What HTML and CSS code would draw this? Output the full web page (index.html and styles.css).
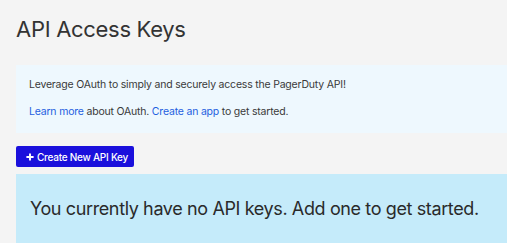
FILE: index.html
```html
<!DOCTYPE html>
<html>

<head>
    <title>API Access Keys</title>
    <link rel="stylesheet" href="styles.css">
</head>

<body>
    <div class="pagina">
        <h1 class="titlu">API Access Keys</h1>

        <div class="infoOAuth">
            <p>Leverage OAuth to simply and securely access the PagerDuty API!</p>
            <p><a href="#">Learn more</a> about OAuth. <a href="#">Create an app</a> to get started.</p>
        </div>

        <button type="button" class="butonCreare">
            <svg class="iconPlus" viewBox="0 0 10 10" width="8" height="8">
                <path d="M5 0.5v9M0.5 5h9" stroke="#fff" stroke-width="2.4" />
            </svg>
            Create New API Key
        </button>

        <div class="cheiGoale">
            <p>You currently have no API keys. Add one to get started.</p>
        </div>
    </div>
</body>

</html>
```

FILE: styles.css
```css
html {
    font-family: Inter, "Noto Sans", sans-serif;
}

body {
    margin: 0px;
    background-color: #f4f4f4;
    color: #2d2d2d;
}

.pagina {
    padding: 0px 0px 0px 16px;
}

.titlu {
    margin: 0px;
    padding-top: 16px;
    height: 49px;
    font-size: 22px;
    font-weight: 400;
    line-height: 26px;
    letter-spacing: -0.3px;
    color: #333;
}

.infoOAuth {
    background-color: #eef8fe;
    padding: 6px 13px 8px 13px;
    font-size: 10.5px;
    letter-spacing: -0.2px;
    color: #3a3a3a;
    margin-bottom: 13px;
}

.infoOAuth p {
    margin: 0px;
    line-height: 27px;
}

.infoOAuth a {
    color: #1f5fe0;
    text-decoration: none;
}

.butonCreare {
    display: flex;
    align-items: center;
    gap: 3px;
    height: 21px;
    padding: 0px 6px 0px 10px;
    margin: 0px 0px 7px 0px;
    border: none;
    border-radius: 2px;
    background-color: #1a10dc;
    color: #fff;
    font-family: Inter, sans-serif;
    font-size: 10px;
    font-weight: 500;
    letter-spacing: -0.25px;
}

.cheiGoale {
    background-color: #c5ebfa;
    height: 80px;
    padding: 0px 14px;
}

.cheiGoale p {
    margin: 0px;
    padding-top: 24px;
    font-size: 18px;
    letter-spacing: -0.38px;
    color: #2a2a2a;
}
```
